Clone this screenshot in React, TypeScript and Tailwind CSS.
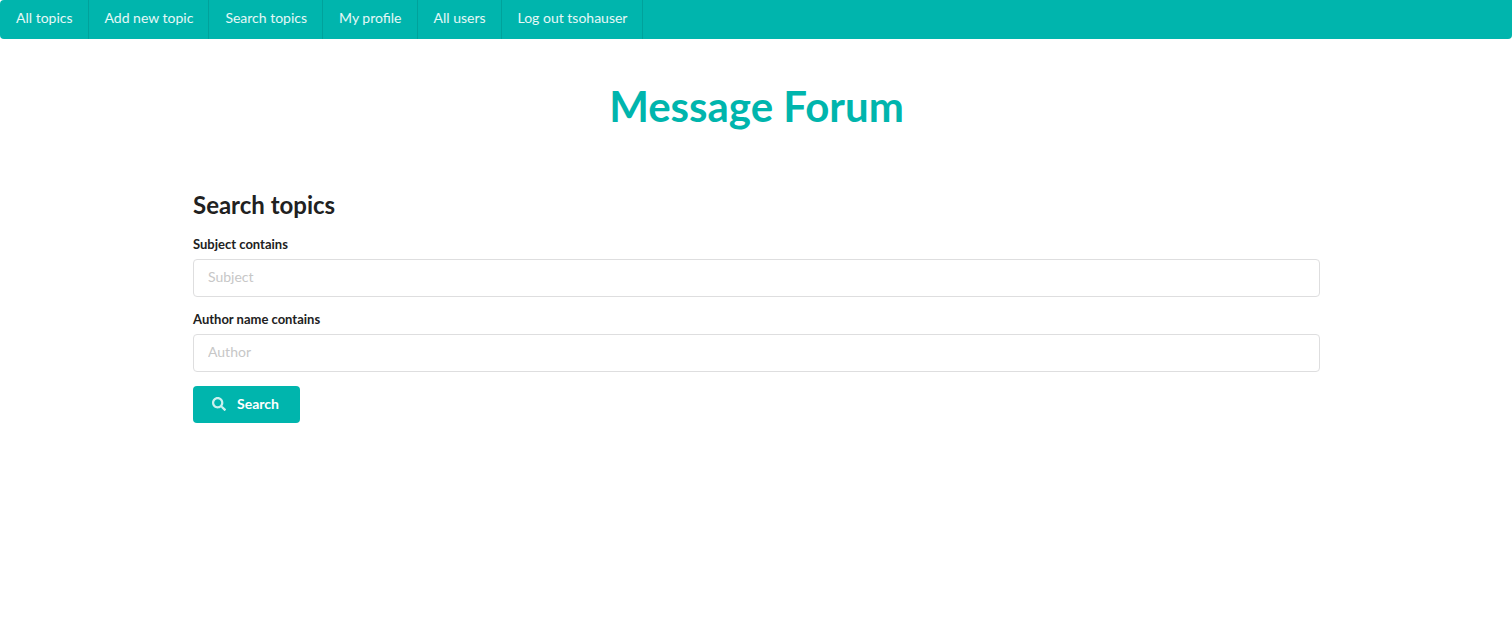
import { FaSearch } from "react-icons/fa";

const links = [
  "All topics",
  "Add new topic",
  "Search topics",
  "My profile",
  "All users",
  "Log out tsohauser",
];

function Field({ id, label, placeholder }: { id: string; label: string; placeholder: string }) {
  return (
    <div className="mb-3.5">
      <label htmlFor={id} className="mb-1.5 block text-[13px] leading-[17px] font-bold">
        {label}
      </label>
      <input
        id={id}
        type="text"
        placeholder={placeholder}
        className="block h-[38px] w-full rounded border border-[#dededf] bg-white px-3.5 pb-1 text-sm outline-none placeholder:text-[#c7c7c7] focus:border-[#85b7d9]"
      />
    </div>
  );
}

export default function App() {
  return (
    <div className="font-[Lato,sans-serif] text-sm text-[#212121]">
      <nav className="flex h-[39px] rounded-tl-sm rounded-br-sm rounded-bl bg-[#00b5ad]">
        {links.map((text) => (
          <a
            key={text}
            href="#"
            className="flex items-center border-r border-black/10 pr-[15px] pb-[3px] pl-4 leading-none text-white/90"
          >
            {text}
          </a>
        ))}
      </nav>
      <main className="mx-auto w-full max-w-[1128px] pl-px">
        <h1 className="mt-10 text-center text-[42px] leading-[54px] font-bold text-[#00b5ad]">
          Message Forum
        </h1>
        <h2 className="mt-14 mb-4 text-2xl leading-[31px] font-bold">Search topics</h2>
        <form onSubmit={(event) => event.preventDefault()}>
          <Field id="subject" label="Subject contains" placeholder="Subject" />
          <Field id="author" label="Author name contains" placeholder="Author" />
          <button
            type="submit"
            className="flex h-[37px] items-center gap-[11px] rounded bg-[#00b5ad] pr-[21px] pb-0.5 pl-[19px] font-bold text-white"
          >
            <FaSearch className="size-3.5 opacity-80" aria-hidden="true" />
            Search
          </button>
        </form>
      </main>
    </div>
  );
}
